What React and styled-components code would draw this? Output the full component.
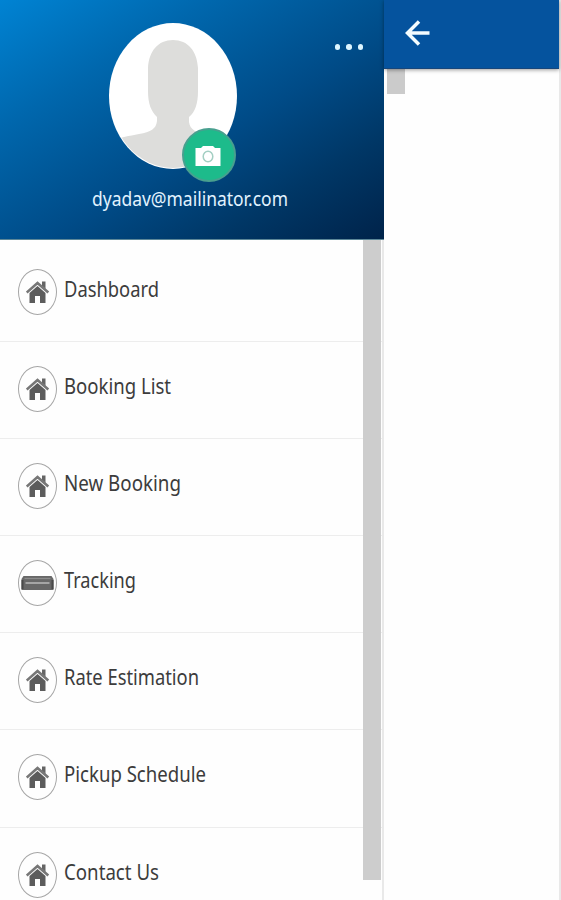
import styled, { createGlobalStyle } from 'styled-components';

const items = [
	{ label: 'Dashboard', width: 95 },
	{ label: 'Booking List', width: 107 },
	{ label: 'New Booking', width: 117 },
	{ label: 'Tracking', width: 72, icon: 'container' },
	{ label: 'Rate Estimation', width: 135 },
	{ label: 'Pickup Schedule', width: 142 },
	{ label: 'Contact Us', width: 95 },
];

export default function App() {
	return (
		<Screen>
			<GlobalStyle />
			<Drawer>
				<Profile>
					<MoreButton aria-label="More"><Dot /><Dot /><Dot /></MoreButton>
					<Avatar>
						<Silhouette />
						<CameraBadge><CameraIcon /></CameraBadge>
					</Avatar>
					<Email>
						<FittedText width={196} size={20.5} color="#e2f3ff" label="dyadav@mailinator.com" />
					</Email>
				</Profile>
				<Menu>
					{items.map(item => (
						<MenuItem key={item.label}>
							<IconRing>
								{item.icon === 'container' ? <ContainerIcon /> : <HomeIcon />}
							</IconRing>
							<ItemText>
								<FittedText width={item.width} size={22} color="#3c3c3c" label={item.label} />
							</ItemText>
						</MenuItem>
					))}
					<Scrollbar />
				</Menu>
			</Drawer>
			<Page>
				<AppBar><BackIcon /></AppBar>
				<PageThumb />
			</Page>
		</Screen>
	);
}

// Condensed label that always takes up the given width
function FittedText({ label, width, size, color }) {
	return (
		<Label width={width} height="32" $size={size} $color={color}>
			<text x="0" y="23" textLength={width} lengthAdjust="spacingAndGlyphs">{label}</text>
		</Label>
	);
}

function Silhouette() {
	return (
		<svg width="128" height="146" viewBox="0 0 128 146">
			<defs>
				<clipPath id="face"><ellipse cx="64" cy="73" rx="63" ry="72" /></clipPath>
			</defs>
			<ellipse cx="64" cy="73" rx="64" ry="73" fill="#fff" />
			<g clipPath="url(#face)" fill="#dddddb">
				<path d="M64 17C79 17 88 28 89 45V68C89 81 86 89 80 94V99C81 107 88 110 98 112C112 114 118 116 124 122V146H6V118C11 114 20 113 30 111C42 109 47 106 48 98V94C42 88 39 81 39 68V45C40 28 49 17 64 17Z" />
			</g>
		</svg>
	);
}

function CameraIcon() {
	return (
		<svg width="26" height="20" viewBox="0 0 26 20">
			<path d="M0.5 2H6L8 0H18L20 2H25.5V20H0.5Z" fill="#fff" />
			<ellipse cx="13" cy="10.5" rx="4.8" ry="5.3" fill="#fff" stroke="#a3cfc3" strokeWidth="1.5" />
		</svg>
	);
}

function HomeIcon() {
	return (
		<svg width="24" height="24" viewBox="0 0 24 24">
			<path d="M3.5 13L11.5 6L19.5 13V23H14V16H9V23H3.5Z" fill="#5c5c5c" />
			<path d="M16 1.5H19.5V9L16 6Z" fill="#656565" />
			<path d="M0.7 12.5L11.5 3L22.3 12.5" fill="none" stroke="#777" strokeWidth="2.6" />
		</svg>
	);
}

function ContainerIcon() {
	return (
		<svg width="34" height="16" viewBox="0 0 34 16">
			<path d="M2.5 1H30.5L32.5 4V15H0.5V4Z" fill="#686868" />
			<path d="M3.5 3.5H29.5" stroke="#8c8c8c" strokeWidth="1.3" />
			<path d="M4.5 8H28.5" stroke="#adadad" strokeWidth="1.8" />
			<path d="M1.5 5V14M31.5 5V14" stroke="#494949" strokeWidth="2" />
		</svg>
	);
}

function BackIcon() {
	return (
		<svg width="26" height="28" viewBox="0 0 26 28">
			<path d="M24.5 14H3M14 2.5L2.5 14L14 25.5" fill="none" stroke="#f4fcff" strokeWidth="3.5" />
		</svg>
	);
}

const GlobalStyle = createGlobalStyle`
	body {
		margin: 0;
		background: #fff;
		overflow: hidden;
	}

	* {
		box-sizing: border-box;
	}

	svg {
		display: block;
		flex-shrink: 0;
	}
`;

const Screen = styled.div`
	display: flex;
	width: 561px;
	height: 900px;
	overflow: hidden;
	background: #fefefe;
`;

const Drawer = styled.aside`
	display: flex;
	flex-direction: column;
	flex: 0 0 384px;
	min-width: 0;
	border-right: 2px solid #e9e9e9;
	z-index: 1;
`;

const Profile = styled.header`
	position: relative;
	display: flex;
	flex-direction: column;
	align-items: center;
	flex: 0 0 240px;
	width: 384px;
	padding: 23px 38px 0 0;
	background: linear-gradient(149deg, #0083d3 0%, #0067ad 27%, #004b87 57%, #003766 78%, #00234a 100%);
	border-bottom: 1px solid #5c8798;
`;

const MoreButton = styled.button`
	position: absolute;
	top: 44px;
	right: 21px;
	display: flex;
	gap: 6px;
	padding: 0;
	border: 0;
	background: none;
`;

const Dot = styled.span`
	width: 5.5px;
	height: 5.5px;
	border-radius: 50%;
	background: #ddf6ff;
`;

const Avatar = styled.div`
	position: relative;
	height: 160px;
`;

const CameraBadge = styled.div`
	position: absolute;
	top: 105px;
	left: 73px;
	display: flex;
	align-items: center;
	justify-content: center;
	width: 54px;
	height: 54px;
	padding: 2px 2px 0 0;
	border: 2px solid #48a08f;
	border-radius: 50%;
	background: #1dbb8b;
`;

const Email = styled.div`
	padding-left: 34px;
`;

const Label = styled.svg`
	overflow: visible;
	font-family: "Noto Sans", "Open Sans", sans-serif;
	font-size: ${({ $size }) => $size}px;
	fill: ${({ $color }) => $color};
`;

const Menu = styled.nav`
	position: relative;
	flex: 1;
	padding-top: 5px;
	overflow: hidden;
`;

const MenuItem = styled.div`
	display: flex;
	align-items: flex-start;
	gap: 7px;
	height: 97.1px;
	padding: 24px 0 0 18px;
	border-bottom: 1px solid #ededed;
`;

const ItemText = styled.span`
	padding-top: 5px;
`;

const IconRing = styled.span`
	display: flex;
	align-items: center;
	justify-content: center;
	width: 39px;
	height: 46px;
	border: 1.5px solid #a6a6a6;
	border-radius: 50%;
`;

const Scrollbar = styled.div`
	position: absolute;
	top: 0;
	right: 1px;
	width: 18px;
	height: 640px;
	background: #cdcdcd;
`;

const Page = styled.main`
	flex: 1;
	border-right: 2px solid #e9e9e9;
`;

const AppBar = styled.header`
	position: relative;
	z-index: 2;
	display: flex;
	align-items: center;
	height: 69px;
	padding: 0 0 3px 21px;
	background: #05539e;
	border-bottom: 1px solid #17467b;
	box-shadow: 0 1px 4px rgba(0, 0, 0, 0.4);
`;

const PageThumb = styled.div`
	width: 18px;
	height: 25px;
	margin-left: 3px;
	background: #cbcbcb;
`;
